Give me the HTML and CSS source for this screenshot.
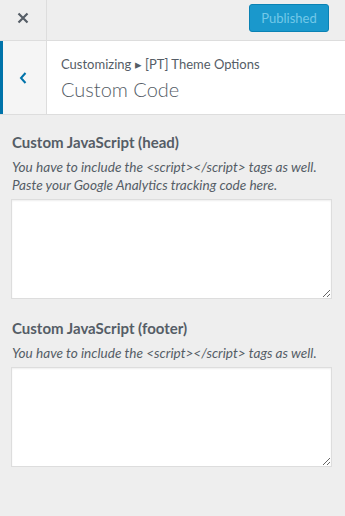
FILE: index.html
```html
<!DOCTYPE html>
<html lang="en">
<head>
    <meta charset="UTF-8">
    <meta name="viewport" content="width=device-width, initial-scale=1.0">
    <title>Custom Code</title>
    <link rel="stylesheet" href="styles.css">
</head>
<body>
    <div class="topbar">
        <div class="close">
            <svg width="12" height="12" viewBox="0 0 12 12"><path d="M1.5 1.5l9 9M10.5 1.5l-9 9" stroke="#555d66" stroke-width="2.2" fill="none"/></svg>
        </div>
        <div class="actions">
            <button class="publish" disabled>Published</button>
        </div>
    </div>
    <div class="section-head">
        <div class="back">
            <svg width="8" height="12" viewBox="0 0 8 12"><path d="M6.5 1L2 6l4.5 5" stroke="#0073aa" stroke-width="2" fill="none"/></svg>
        </div>
        <div class="title">
            <span class="crumb">Customizing &#9656; [PT] Theme Options</span>
            <h1>Custom Code</h1>
        </div>
    </div>
    <div class="controls">
        <div class="control">
            <label class="control-title">Custom JavaScript (head)</label>
            <p class="description">You have to include the &lt;script&gt;&lt;/script&gt; tags as well. Paste your Google Analytics tracking code here.</p>
            <textarea></textarea>
        </div>
        <div class="control">
            <label class="control-title">Custom JavaScript (footer)</label>
            <p class="description">You have to include the &lt;script&gt;&lt;/script&gt; tags as well.</p>
            <textarea></textarea>
        </div>
    </div>
</body>
</html>
```

FILE: styles.css
```css
*{margin: 0;padding: 0;box-sizing: border-box;}
body{background: #eee;font-family: Lato, "Open Sans", sans-serif;color: #555d66;width: 345px;}
.topbar{display: flex;height: 41px;border-bottom: 1px solid #ddd;}
.close{width: 47px;border-right: 1px solid #ddd;display: flex;align-items: center;justify-content: center;padding-bottom: 4px;}
.actions{flex: 1;display: flex;justify-content: flex-end;padding: 4px 16px 0 0;}
.publish{width: 80px;height: 28px;border: 1px solid #0a82b4;border-radius: 3px;background: #1a98cc;color: #73c8e8;font-family: inherit;font-size: 13px;}
.section-head{display: flex;height: 74px;background: #fff;border-bottom: 1px solid #ddd;}
.back{width: 47px;background: #f5f5f5;border-left: 3px solid #0073aa;border-right: 1px solid #ddd;display: flex;align-items: center;justify-content: center;padding-right: 4px;}
.title{padding: 14px 0 0 14px;}
.crumb{display: block;font-size: 13px;line-height: 18px;}
.title h1{font-size: 20px;font-weight: 300;line-height: 28px;margin-top: 2px;}
.controls{padding: 15px 13px 0 11px;}
.control{margin-bottom: 17px;}
.control-title{display: block;font-size: 15px;font-weight: 700;line-height: 24px;margin: 0 0 4px 1px;}
.description{font-size: 13.6px;font-style: italic;line-height: 18px;margin: 0 0 5px 1px;}
textarea{display: block;width: 100%;height: 100px;border: 1px solid #ddd;background: #fff;box-shadow: inset 0 1px 2px rgba(0,0,0,.07);}
```
